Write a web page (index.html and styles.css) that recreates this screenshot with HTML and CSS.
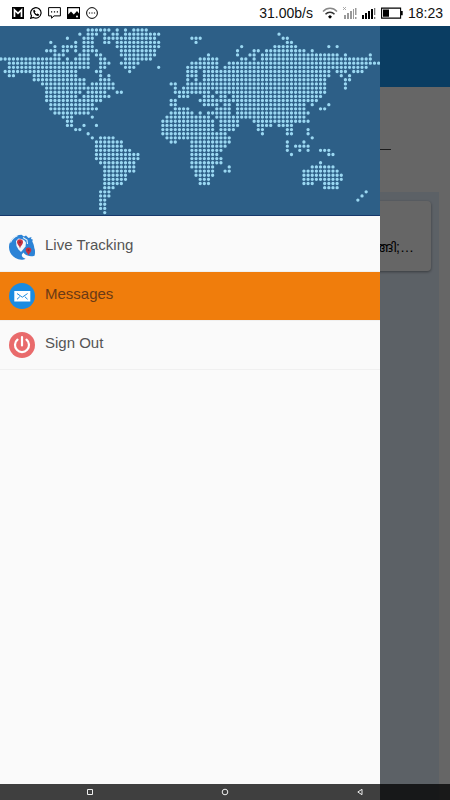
FILE: index.html
```html
<!DOCTYPE html>
<html lang="en">
<head>
    <meta charset="UTF-8">
    <meta name="viewport" content="width=device-width, initial-scale=1.0">
    <title>Messages</title>
    <link rel="stylesheet" href="styles.css">
</head>
<body>
    <div class="statusbar">
        <div class="notifications">
            <svg width="12" height="12" viewBox="0 0 12 12"><path d="M0 0h12v12H0z"/><path d="M2.500 10V3L6 6.400 9.500 3v7" fill="none" stroke="#fff" stroke-width="1.700"/></svg>
            <svg width="12" height="12" viewBox="0 0 12 12"><path d="M.7 11.300l.8-2.600A5.200 5.200 0 1 1 3.500 10.500z" fill="none" stroke="#000" stroke-width="1.200"/><path d="M3.300 3.200l1.200-.5 1 1.900-.7.800 1.800 1.800.8-.7 1.800 1-.5 1.300C6.500 9.700 2.800 6.200 3.300 3.200z"/></svg>
            <svg width="13" height="12" viewBox="0 0 13 12"><path d="M.6.600h11.800v8.300H6L3.600 11.200V8.900h-3z" fill="none" stroke="#000" stroke-width="1"/><path d="M3 4.200h1.200v1.200H3zM5.900 4.200h1.200v1.200H5.900zM8.800 4.200H10v1.200H8.800z"/></svg>
            <svg width="13" height="12" viewBox="0 0 13 12"><path d="M0 0h13v12H0z"/><path d="M1.200 7.500L4 4.500l2.800 3L10 4l2 2.500V1.200H1.200z" fill="#fff"/><circle cx="10" cy="9.500" r="1" fill="#fff"/></svg>
            <svg width="12" height="12" viewBox="0 0 12 12"><circle cx="6" cy="6" r="5.400" fill="none" stroke="#000" stroke-width="1"/><path d="M2.900 5.400h1.200v1.200H2.900zM5.400 5.400h1.200v1.200H5.400zM7.900 5.400h1.200v1.200H7.900z"/></svg>
        </div>
        <div class="system">
            <span>31.00b/s</span>
            <svg class="wifi" width="16" height="12" viewBox="0 0 16 12" fill="none" stroke="#333" stroke-width="1.500"><path d="M1 4.500C5 .3 11 .3 15 4.500" stroke="#888"/><path d="M3.500 7.200C6 4.500 10 4.500 12.500 7.200"/><path d="M8 8l2 1.700-2 2-2-2z" fill="#000" stroke="none"/></svg>
            <svg width="14" height="12" viewBox="0 0 14 12" fill="#999"><path d="M0 0l3 3M3 0L0 3" stroke="#999" stroke-width=".8"/><path d="M1 8h2v4H1zM4 6h2v6H4zM7 4h2v8H7zM10 2h1v10h-1zM12 1h1.500v7H12zM12 10h1.500v2H12z"/></svg>
            <svg width="14" height="12" viewBox="0 0 14 12"><path d="M0 8h2v4H0zM3 6h2v6H3zM6 4h2v8H6zM9 2h2v10H9z"/><path d="M12 1h1.300v7H12zM12 10h1.300v2H12z" fill="#777"/></svg>
            <svg width="22" height="12" viewBox="0 0 22 12"><path d="M.6 1.100h19v10H.6z" fill="none" stroke="#000" stroke-width="1.100"/><path d="M2 2.500h6v7.200H2zM20 4h1.700v4.200H20z"/></svg>
            <span>18:23</span>
        </div>
    </div>

    <div class="app">
        <header class="toolbar"></header>
        <main class="page">
            <input class="search" type="text" aria-label="Search messages">
            <div class="messages">
                <div class="card"><p class="card-text" lang="ml">തുടങ്ങി;…</p></div>
            </div>
        </main>

        <div class="scrim"></div>

        <aside class="drawer">
            <svg class="map" viewBox="-.24 -.96 91.570 45.600" role="img" aria-label="World map">
                <path id="dots"/>
            </svg>
            <nav class="menu">
                <a class="item" href="#tracking">
                    <svg class="icon" viewBox="0 0 26 26">
                        <path d="M10 1C4 2.500-.2 7.500 0 13.500.3 20 5.500 25.600 12.500 25.800c1.500 0 3-.3 4-1-3-.8-4.200-2.600-3.500-4.500l1.500-1.800c1.800 2.700 6 4.700 11 3.200.8-2.700.8-5.200-.2-7.700-.2-2.500-1-4.500-2-6.500l.5-2-1.800-.5.500-2-3 1-2.500-2.500-2 1-2.500-1.700z" fill="#2c83d6"/>
                        <path d="M7 7l2.500-2.500 3 .5 2.500 1 2 2.500-.5 4-2 2.500-2.500 3-2.500-2.500-2-3.500z" fill="#f3f7fb"/>
                        <path d="M1.500 8.500C3 5 5 3 8.500 1.800M14 3.500l4 2.500.5 4" fill="none" stroke="#e9f3fb" stroke-width="1.100"/>
                        <path d="M11 14.500c-.5-2.800-3-4-3-6.200a3 3 0 0 1 6 0c0 2.200-2.500 3.400-3 6.200zM19.500 21.500c-.5-2.300-2.800-3.300-2.800-5.300a2.800 2.800 0 0 1 5.600 0c0 2-2.300 3-2.800 5.300z" fill="#c83140"/>
                        <circle cx="11" cy="8.300" r="1.100" fill="#7a3340"/><circle cx="19.500" cy="16.200" r="1" fill="#7a3340"/>
                    </svg>
                    <span class="label">Live Tracking</span>
                </a>
                <a class="item active" href="#messages">
                    <svg class="icon" viewBox="0 0 26 26">
                        <circle cx="13" cy="13" r="13" fill="#1b8be0"/>
                        <path d="M5.300 8h16v10.500h-16z" fill="#fff"/>
                        <path d="M8 10.500l5.300 3.700 5.300-3.700M8 16.300l2.800-2.600M18.600 16.300l-2.800-2.600" fill="none" stroke="#1b8be0" stroke-width="1"/>
                    </svg>
                    <span class="label">Messages</span>
                </a>
                <a class="item" href="#signout">
                    <svg class="icon" viewBox="0 0 26 26">
                        <circle cx="13" cy="13" r="13" fill="#e96b6c"/>
                        <path d="M8.500 7.700a7 7 0 1 0 9 0M13 5v8.500" fill="none" stroke="#fff" stroke-width="2.200" stroke-linecap="round"/>
                    </svg>
                    <span class="label">Sign Out</span>
                </a>
            </nav>
        </aside>
    </div>

    <div class="navbar">
        <button type="button" aria-label="Recent apps"><svg width="8" height="8" viewBox="0 0 8 8"><path d="M1.500 1.500h5v5h-5z"/></svg></button>
        <button type="button" aria-label="Home"><svg width="8" height="8" viewBox="0 0 8 8"><circle cx="4" cy="4" r="2.800"/></svg></button>
        <button type="button" aria-label="Back"><svg width="8" height="8" viewBox="0 0 8 8"><path d="M6 1.300v5.400L1.800 4z"/></svg></button>
    </div>

<script>
    // columns that have a dot, row by row from the top
    const rows = [
        '21-26 28 30 32-35', '19 21-23 25 27-28 30-38 67', '16 20-22 25-37 46-48 68-69',
        '12 18 20-22 25-26 28-38 47 69-70', '13 15-18 20-22 28-38 58 66-71 79 81',
        '11-13 15-16 18 20-23 29-37 57 61-62 64-73 75', '13-15 19-21 23-24 29-37 50 57 60-61 63-81 83 89',
        '0-14 16 18-21 24-25 30-36 48-52 58-59 61 63-89', '2-21 24-26 29-33 46-52 55-91',
        '2-21 24-25 30-32 38 45-52 54-88', '1-18 23-24 31 45-47 49-79 81-83 85-87',
        '2-3 8-18 24 26 45-47 49-79 82 84', '8-20 24-26 45 47 49-78 83-84', '10-20 22-27 41-42 45-78 83',
        '11-27 42 44-78 83', '11-19 21-25 28-29 42-50 52-78', '11-18 20-26 43-45 49-51 53-54 56-77',
        '11-24 41-42 48-76', '12-22 41-42 49-52 54-55 57-73 75 79', '12-23 42-45 52-55 57-73 77-78',
        '13-21 41-46 48 50-55 57-74', '15-17 22 40-50 52-73', '16-17 39-51 53-57 61-74',
        '16-17 20 23 39-51 53-57 62-65 67-70', '18-19 39-51 53-56 62-63 69-70 74', '21 39-54 63 69-70 74',
        '22 24-27 40-55 75', '23-29 41-42 46-55 69 73', '23-29 46-54 69 71-74', '23-31 46-53 69 72 74 77-79',
        '23-33 46-52 70 79-80', '23-33 46-53', '24-32 46-53 77', '25-32 46-51 55 75-80',
        '25-32 47-51 54-55 73-81', '25-30 47-51 73-82', '25-30 48-50 73-82', '25-29 48-50 73-75 78-81',
        '25-27 78-81', '24-26 88', '24-26 87', '24-25 86', '24-25', '24-25', '25'
    ];
    let d = '';
    rows.forEach((row, y) => {
        row.split(' ').forEach(run => {
            const [from, to = from] = run.split('-');
            d += `M${from} ${y}h${to - from + 0.05}`;
        });
    });
    document.getElementById('dots').setAttribute('d', d);
</script>
</body>
</html>
```
FILE: styles.css
```css
* {
    box-sizing: border-box;
}
body {
    margin: 0;
    height: 100vh;
    display: flex;
    flex-direction: column;
    position: relative;
    overflow: hidden;
    font-family: "Liberation Sans", Arial, sans-serif;
    background: #fff;
}
svg {
    display: block;
    flex-shrink: 0;
}
.statusbar {
    height: 26px;
    padding: 0 7px 0 12px;
    display: flex;
    align-items: center;
    justify-content: space-between;
    font-size: 14px;
    color: #111;
}
.notifications, .system {
    display: flex;
    align-items: center;
    gap: 6px;
}
.system {
    gap: 5px;
}
.wifi {
    margin-left: 4px;
}
.app {
    flex: 1;
    position: relative;
    display: flex;
    flex-direction: column;
}
.toolbar {
    height: 61px;
    background: #1b98f5;
}
.page {
    flex: 1;
    display: flex;
    flex-direction: column;
    padding: 24px 11px 0;
    background: #fff;
}
.search {
    height: 39px;
    margin: 0 48px;
    border: 0;
    border-bottom: 1px solid #444;
    background: none;
}
.messages {
    flex: 1;
    margin-top: 42px;
    padding: 9px 8px;
    background: #e6f2ff;
}
.card {
    padding: 34px 17px 12px;
    border-radius: 4px;
    background: #fff;
    box-shadow: 0 1px 3px rgba(0, 0, 0, 0.4);
}
.card-text {
    margin: 0;
    font-size: 14px;
    line-height: 24px;
    text-align: right;
    color: #000;
}
.scrim {
    position: absolute;
    inset: 0;
    background: rgba(0, 0, 0, 0.6);
}
/* side menu over the page */
.drawer {
    position: absolute;
    top: 0;
    bottom: 0;
    left: 0;
    width: calc(100% - 70px);
    background: #fafafa;
}
.map {
    width: 100%;
    background: #2d5f87;
    border-bottom: 1px solid #16386b;
}
.map path {
    fill: none;
    stroke: #9bd8f2;
    stroke-width: 0.8;
    stroke-linecap: round;
    stroke-dasharray: 0 1;
}
.menu {
    padding-top: 7px;
}
.item {
    height: 49px;
    padding: 0 9px;
    display: flex;
    align-items: center;
    gap: 10px;
    border-bottom: 1px solid #f0f0f0;
    color: #555;
    font-size: 15px;
    text-decoration: none;
}
.active {
    background: #f07d0c;
    color: #6b3a16;
}
.icon {
    width: 26px;
    height: 26px;
}
.label {
    padding-bottom: 6px;
}
.navbar {
    position: absolute;
    left: 0;
    right: 0;
    bottom: 0;
    height: 16px;
    display: flex;
    background: rgba(0, 0, 0, 0.75);
    padding: 0 22px;
}
.navbar button {
    flex: 1;
    display: flex;
    align-items: center;
    justify-content: center;
    padding: 0;
    border: 0;
    background: none;
}
.navbar path, .navbar circle {
    fill: none;
    stroke: #eee;
    stroke-width: 1;
}
```
